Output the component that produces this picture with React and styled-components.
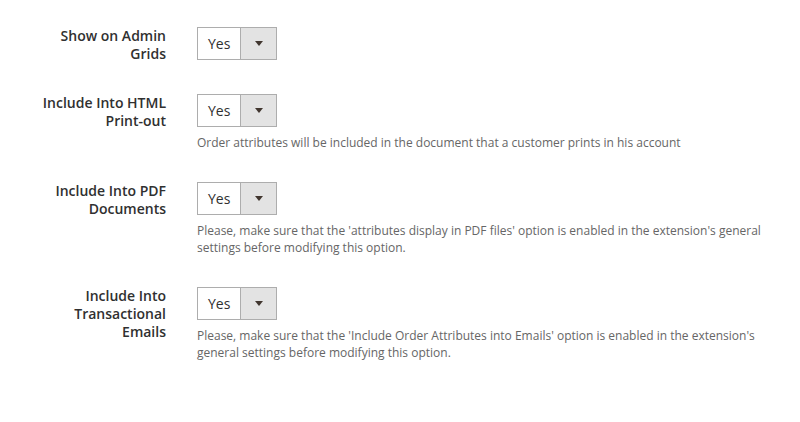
import React from "react";
import styled, { createGlobalStyle } from "styled-components";

const GlobalStyle = createGlobalStyle`
  body {
    margin: 0;
    background: #ffffff;
    font-family: "Open Sans", "Liberation Sans", sans-serif;
    color: #303030;
  }
`;

const Form = styled.div`
  padding: 27px 0 0 36px;
  width: 750px;
`;

const Row = styled.div`
  display: grid;
  grid-template-columns: 130px 575px;
  column-gap: 31px;
  margin-bottom: 31px;
`;

const Label = styled.div`
  text-align: right;
  font-size: 14px;
  font-weight: 600;
  line-height: 18px;
  color: #303030;
`;

const Control = styled.div`
  display: flex;
  flex-direction: column;
  align-items: flex-start;
`;

const Select = styled.div`
  display: flex;
  width: 80px;
  height: 33px;
  box-sizing: border-box;
  border: 1px solid #adadad;
  background: #ffffff;
`;

const Value = styled.div`
  flex: 1;
  padding-left: 10px;
  font-size: 14px;
  line-height: 31px;
  color: #303030;
`;

const Arrow = styled.div`
  width: 35px;
  background: #e3e3e3;
  border-left: 1px solid #adadad;
  display: flex;
  align-items: center;
  justify-content: center;

  &::after {
    content: "";
    border-left: 4.5px solid transparent;
    border-right: 4.5px solid transparent;
    border-top: 5px solid #41362f;
  }
`;

const Note = styled.div`
  margin-top: 7px;
  font-size: 12px;
  line-height: 17px;
  color: #666666;
`;

const fields = [
  { label: "Show on Admin Grids" },
  {
    label: "Include Into HTML Print-out",
    note: "Order attributes will be included in the document that a customer prints in his account",
  },
  {
    label: "Include Into PDF Documents",
    note: "Please, make sure that the 'attributes display in PDF files' option is enabled in the extension's general settings before modifying this option.",
  },
  {
    label: "Include Into Transactional Emails",
    note: "Please, make sure that the 'Include Order Attributes into Emails' option is enabled in the extension's general settings before modifying this option.",
  },
];

const App = () => (
  <>
    <GlobalStyle />
    <Form>
      {fields.map((f) => (
        <Row key={f.label}>
          <Label>{f.label}</Label>
          <Control>
            <Select>
              <Value>Yes</Value>
              <Arrow />
            </Select>
            {f.note && <Note>{f.note}</Note>}
          </Control>
        </Row>
      ))}
    </Form>
  </>
);

export default App;
